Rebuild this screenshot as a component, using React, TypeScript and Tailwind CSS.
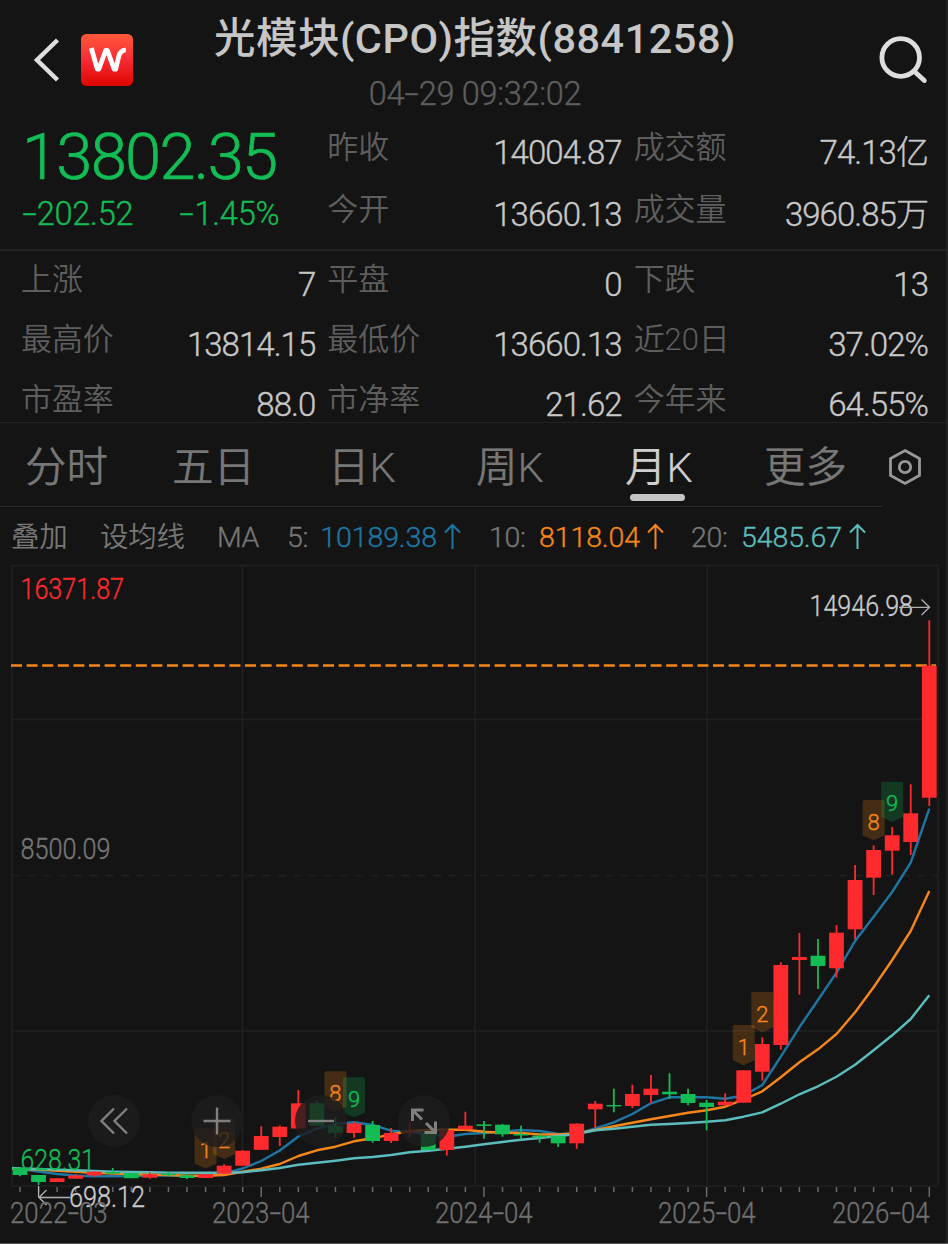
import React from "react";

type Candle = [up: 0 | 1, open: number, close: number, high: number, low: number];

const STEP = 18.557;
const xAt = (i: number) => 20 + i * STEP;

const candles: Candle[] = [
  [0, 1167.7, 1175, 1167.7, 1176.3], [0, 1175, 1182, 1175, 1185], [1, 1178.3, 1182, 1178.3, 1182],
  [1, 1175.5, 1178.7, 1174, 1178.7], [1, 1171.6, 1175.5, 1171.6, 1176.7], [0, 1172, 1173.7, 1168, 1173.7],
  [0, 1173, 1178.2, 1173, 1178.2], [1, 1174.3, 1177.7, 1172.3, 1178.7], [0, 1173.7, 1175.3, 1172, 1176.3],
  [0, 1175.3, 1178, 1174, 1179], [1, 1174, 1178, 1174, 1178], [1, 1165.7, 1173.7, 1164.3, 1173.7],
  [1, 1150.7, 1165.7, 1150.2, 1165.7], [1, 1136, 1149.8, 1126.3, 1149.8], [1, 1126.7, 1137, 1125.5, 1146],
  [1, 1103.3, 1128.5, 1090, 1128.5], [0, 1103.3, 1125.7, 1100.7, 1125.7], [0, 1126, 1132.7, 1116.7, 1137.7],
  [1, 1123.5, 1133, 1122, 1137.7], [0, 1125, 1141, 1121, 1142.7], [1, 1133, 1141, 1128, 1143],
  [1, 1130.5, 1132.5, 1121.7, 1137], [0, 1133, 1150, 1133, 1150], [1, 1130, 1150, 1128, 1155.5],
  [1, 1125.7, 1129.5, 1111.7, 1129.5], [0, 1124.4, 1126, 1121, 1138.7], [0, 1124.7, 1134.3, 1124, 1136.7],
  [0, 1134, 1135.5, 1125.7, 1139.3], [0, 1135.7, 1137.3, 1133, 1142.7], [0, 1136, 1143.3, 1136, 1147],
  [1, 1123.7, 1143.3, 1123.3, 1148.7], [1, 1103.7, 1109.3, 1101, 1128], [0, 1105, 1106.4, 1088.7, 1112.3],
  [1, 1094, 1106, 1084.7, 1108], [1, 1088.7, 1095, 1075, 1103.3], [0, 1091.7, 1094.3, 1073.3, 1099],
  [0, 1094, 1103, 1088.7, 1105.3], [0, 1102.7, 1107, 1100, 1130.3], [1, 1101.7, 1105.3, 1093.3, 1105.3],
  [1, 1070.3, 1102.7, 1070.3, 1102.7], [1, 1044, 1071.7, 1037.3, 1080.7], [1, 965, 1045, 962.3, 1049.7],
  [1, 957, 960, 933, 994.7], [0, 955.7, 966, 939, 989], [1, 932.7, 968.3, 925, 977.7],
  [1, 880, 929.3, 865, 939.3], [1, 850, 877.7, 845.3, 895], [1, 835.3, 850.7, 827, 874.7],
  [1, 813.3, 842, 784.3, 855], [1, 665.7, 797.7, 620.3, 806],
];

const ma5 = [
  1169, 1171.5, 1174, 1175.5, 1176.3, 1176.3, 1176, 1175.5, 1175.5, 1176, 1175.7, 1173.5, 1168.5, 1161, 1150.5,
  1136.5, 1128.7, 1124, 1122.3, 1125, 1130.7, 1132, 1134, 1136.8, 1134, 1133, 1131.7, 1130, 1131, 1134, 1134,
  1128.3, 1122.3, 1114, 1103.3, 1097.3, 1097.3, 1097.3, 1098.7, 1095.5, 1085, 1056.7, 1027.3, 1000, 972.7, 941,
  916.7, 892, 862.7, 808.7,
];
const ma10 = [
  1169, 1169.5, 1170.7, 1171.8, 1172.8, 1173.5, 1174, 1174.5, 1175, 1175.8, 1175.7, 1175, 1171.7, 1168.7, 1164,
  1156, 1150.3, 1146.7, 1141.3, 1138.3, 1134.3, 1131.3, 1130, 1129.7, 1129.7, 1131.7, 1132.7, 1133, 1134.5,
  1134.5, 1133.3, 1130, 1126.3, 1122.7, 1119.3, 1116, 1112.7, 1110.3, 1106.7, 1099.5, 1091.3, 1077.3, 1062.3,
  1049.3, 1034, 1012.3, 987.3, 960, 931, 891,
];
const ma20 = [
  1168.5, 1169, 1169.6, 1170.3, 1171, 1171.6, 1172, 1172.3, 1172.6, 1172.8, 1172.8, 1172.7, 1172.2, 1170.2, 1168,
  1164.7, 1162.7, 1160.7, 1158.3, 1157, 1155, 1152.3, 1150.7, 1148.7, 1146.7, 1144.3, 1142, 1139.7, 1138, 1136,
  1134, 1130.3, 1128.7, 1126.7, 1124.7, 1124, 1123, 1121.7, 1120.3, 1116.7, 1112.3, 1103.7, 1094.3, 1086.3,
  1076.7, 1064.7, 1050.3, 1035.3, 1019, 995.3,
];

const signals = [
  { i: 10, top: 1128.3, n: "1", green: false },
  { i: 11, top: 1118.7, n: "2", green: false },
  { i: 17, top: 1071.3, n: "8", green: false },
  { i: 18, top: 1077.3, n: "9", green: true },
  { i: 39, top: 1025, n: "1", green: false },
  { i: 40, top: 992, n: "2", green: false },
  { i: 46, top: 800, n: "8", green: false },
  { i: 47, top: 781.7, n: "9", green: true },
];

const path = (ys: number[]) => `M12 ${ys[0] - 0.5}` + ys.map((y, i) => `L${xAt(i).toFixed(1)} ${y}`).join("");

/** Numeric text whose hyphens are drawn at the width of a figure dash. */
function Num({ children, className = "" }: { children: string; className?: string }) {
  return (
    <span className={`whitespace-nowrap [-webkit-text-stroke:0.35px_currentColor] ${className}`}>
      {children.split(/(-)/).map((part, i) =>
        part === "-" ? (
          <span key={i} className="inline-block w-[0.45em] text-center tracking-normal">
            <span className="inline-block origin-center scale-x-[1.6]">-</span>
          </span>
        ) : (
          part
        ),
      )}
    </span>
  );
}

function Stat({ label, value }: { label: string; value: string }) {
  return (
    <div className="flex h-[60px] items-center justify-between">
      <span className="pb-[9px] text-[31px] leading-none font-[350] tracking-[-0.1px] text-[#5e5e5e]">{label}</span>
      <Num className="mr-[1px] text-[33px] leading-none font-light tracking-[-0.95px] text-[#c8c8c8]">{value}</Num>
    </div>
  );
}

function PriceLabel({ x, y, width, color, children }: { x: number; y: number; width: number; color: string; children: string }) {
  return (
    <text
      x={x} y={y} textLength={width} lengthAdjust="spacingAndGlyphs"
      fill={color} stroke={color} strokeWidth="0.35" fontSize="29" fontWeight="300"
    >
      {children}
    </text>
  );
}

function Chart() {
  return (
    <svg className="relative block overflow-visible" width="948" height="640" viewBox="0 560 948 640" fill="none">
      <g stroke="#202020" strokeWidth="1.5">
        <rect x="12" y="565.5" width="926" height="620.5" />
        <path d="M12 719.5H938M12 1031H938M242.5 565V1186M475 565V1186M707 565V1186" />
        <path d="M12 875.5H938" strokeDasharray="8 7.6" />
      </g>
      <g stroke="#6a6a6a" strokeWidth="1.5">
        {candles.map((_, i) => (
          <path key={i} d={`M${xAt(i)} 1187V${i > 1 && i % 12 === 1 ? 1197 : 1192}`} />
        ))}
      </g>
      <g strokeWidth="2.4" strokeLinejoin="round">
        <path d={path(ma5)} stroke="#1f76a3" />
        <path d={path(ma10)} stroke="#f5871a" />
        <path d={path(ma20)} stroke="#5dbcbc" />
      </g>
      <path d="M11 665.5H936" stroke="#f5871a" strokeWidth="2.6" strokeDasharray="11 4.6" />
      {candles.map(([up, a, b, hi, lo], i) => (
        <g key={i} fill={up ? "#ff2a2d" : "#12bd55"}>
          <rect x={xAt(i) - 0.9} y={hi} width="1.8" height={lo - hi} />
          <rect x={xAt(i) - 7.4} y={a} width="14.8" height={b - a} />
        </g>
      ))}
      {signals.map(({ i, top, n, green }) => (
        <g key={i}>
          <path
            d={`M${xAt(i) - 11} ${top + 1.5}q0-1.5 1.5-1.5h19q1.5 0 1.5 1.5v33.8l-11 5-11-5z`}
            fill={green ? "#12bd55" : "#f5871a"}
            fillOpacity="0.22"
          />
          <text
            x={xAt(i)} y={top + 29.5} fontSize="22" textAnchor="middle" fontWeight="300"
            fill={green ? "#12bd55" : "#f5871a"} stroke={green ? "#12bd55" : "#f5871a"} strokeWidth="0.35"
          >
            {n}
          </text>
        </g>
      ))}
      <PriceLabel x={20.5} y={599} width={103.5} color="#ff2a2d">16371.87</PriceLabel>
      <PriceLabel x={20.5} y={859} width={90} color="#777">8500.09</PriceLabel>
      <PriceLabel x={20.5} y={1170.3} width={74.5} color="#12bd55">628.31</PriceLabel>
      <PriceLabel x={69} y={1207.3} width={76} color="#cbcbcb">698.12</PriceLabel>
      <PriceLabel x={809.5} y={616.3} width={103.5} color="#cbcbcb">14946.98</PriceLabel>
      <g stroke="#b0b0b0" strokeWidth="1.3">
        <path d="M38.6 1186V1197M70 1197.5H39M46.5 1190L39 1197.5L46.5 1205" />
        <path d="M899 607.3H929M921.5 599.5L929.5 607.3L921.5 615" />
      </g>
    </svg>
  );
}

function RoundButton({ children }: { children: React.ReactNode }) {
  return (
    <button className="flex size-[52px] items-center justify-center rounded-full bg-[#1d1d1d]/80">
      <svg width="28" height="28" viewBox="0 0 28 28" fill="none" stroke="#808080" strokeWidth="2.4">
        {children}
      </svg>
    </button>
  );
}

function Tab({ children, active }: { children: string; active?: boolean }) {
  return (
    <div
      className={`relative text-[41.5px] leading-[90px] font-[350] whitespace-nowrap [-webkit-text-stroke:0.2px_currentColor] ${
        active ? "text-[#cfcfcf]" : "text-[#777]"
      }`}
    >
      {children}
      {active && <span className="absolute top-[71px] left-[5px] h-[6.5px] w-[55px] rounded-full bg-[#c4c4c4]" />}
    </div>
  );
}

function Average({ label, value, color }: { label: string; value: string; color: string }) {
  return (
    <div className="flex">
      <Num>{label}</Num>
      <span className={`ml-auto flex ${color}`}>
        <Num className="tracking-[-0.1px]">{value}</Num>
        <svg className="mt-[16px] ml-[7px]" width="17" height="27" viewBox="0 0 17 27" fill="none" stroke="currentColor" strokeWidth="2">
          <path d="M8.5 26V2M1 9.5L8.5 2L16 9.5" />
        </svg>
      </span>
    </div>
  );
}

export default function App() {
  return (
    <main className="relative flex h-[1244px] w-[948px] flex-col overflow-hidden border-b border-[#555] bg-[#141414] font-['Roboto','Noto_Sans_CJK_SC',sans-serif]">
      <header className="flex h-[120px] shrink-0 justify-between">
        <div className="flex items-center pl-[33px]">
          <svg width="28" height="44" viewBox="0 0 28 44" fill="none" stroke="#dedede" strokeWidth="4.5">
            <path d="M24.5 2L4 22L24.5 42" />
          </svg>
          <svg className="ml-[20px]" width="52" height="52" viewBox="0 0 52 52">
            <defs>
              <linearGradient id="logo" x1="0" y1="0" x2="0" y2="1">
                <stop offset="0" stopColor="#ff5a38" />
                <stop offset="0.45" stopColor="#fa2f38" />
                <stop offset="1" stopColor="#dd0500" />
              </linearGradient>
            </defs>
            <rect width="52" height="52" rx="5.5" fill="url(#logo)" />
            <path
              d="M10.3 14L16.3 35.2H17.8L24.6 16.5H26.4L33.2 35.2H34.7L37.6 23Q39.3 16 44.8 16.2"
              fill="none" stroke="#fff" strokeWidth="4.8" strokeLinejoin="round"
            />
          </svg>
        </div>
        <div className="flex flex-col items-center text-center">
          <h1 className="mt-[14px] text-[41.5px] leading-[50px] font-medium tracking-[0.5px] whitespace-nowrap text-[#c6c6c6]">
            光模块(CPO)指数(8841258)
          </h1>
          <Num className="mt-[10px] text-[32.5px] leading-[40px] font-light tracking-[-0.3px] text-[#5e5e5e]">04-29 09:32:02</Num>
        </div>
        <svg className="mt-[34px] mr-[19px] ml-[60px]" width="52" height="52" viewBox="0 0 52 52" fill="none" stroke="#dedede" strokeWidth="4.8">
          <circle cx="23.7" cy="23.5" r="18.8" />
          <path d="M37 37L47.3 46.5" strokeLinecap="round" />
        </svg>
      </header>

      <section className="grid h-[131px] shrink-0 grid-cols-3 gap-x-[11px] border-b-2 border-[#242424] pr-[19px] pl-[21px]">
        <div className="text-[#12bd55]">
          <div className="mt-[3px] pl-[1px] text-[65px] leading-[69px] font-light tracking-[-1.7px] [-webkit-text-stroke:0.7px_currentColor]">
            13802.35
          </div>
          <div className="mt-[2px] flex justify-between pr-[37px] pl-[1px] text-[32.5px] leading-[40px] font-light tracking-[-0.2px]">
            <Num>-202.52</Num>
            <Num>-1.45%</Num>
          </div>
        </div>
        <div className="flex flex-col gap-[2px] pt-[2px]">
          <Stat label="昨收" value="14004.87" />
          <Stat label="今开" value="13660.13" />
        </div>
        <div className="flex flex-col gap-[2px] pt-[2px]">
          <Stat label="成交额" value="74.13亿" />
          <Stat label="成交量" value="3960.85万" />
        </div>
      </section>

      <section className="grid h-[172px] shrink-0 auto-rows-[60px] grid-cols-3 gap-x-[11px] border-b border-[#242424] pt-[3px] pr-[19px] pl-[21px]">
        <Stat label="上涨" value="7" />
        <Stat label="平盘" value="0" />
        <Stat label="下跌" value="13" />
        <Stat label="最高价" value="13814.15" />
        <Stat label="最低价" value="13660.13" />
        <Stat label="近20日" value="37.02%" />
        <Stat label="市盈率" value="88.0" />
        <Stat label="市净率" value="21.62" />
        <Stat label="今年来" value="64.55%" />
      </section>

      <nav className="flex h-[84px] shrink-0">
        <div className="grid w-[882px] grid-cols-[147px_156px_148px_149px_139px_auto] border-b border-[#2a2a2a] pl-[25px]">
          <Tab>分时</Tab>
          <Tab>五日</Tab>
          <Tab>日K</Tab>
          <Tab>周K</Tab>
          <Tab active>月K</Tab>
          <Tab>更多</Tab>
        </div>
        <svg className="mt-[25px] ml-[6px]" width="34" height="38" viewBox="0 0 34 38" fill="none" stroke="#999" strokeWidth="2.8">
          <path d="M17 2.5L31.5 10.5V27.5L17 35.5L2.5 27.5V10.5Z" />
          <circle cx="17" cy="19" r="5.7" />
        </svg>
      </nav>

      <div className="grid h-[53px] shrink-0 grid-cols-[89px_117px_70px_174px_28px_175px_27px_175px] pl-[11px] text-[28.5px] leading-[61px] font-[350] tracking-[-0.3px] whitespace-nowrap text-[#777]">
        <span>叠加</span>
        <span>设均线</span>
        <Num>MA</Num>
        <Average label="5:" value="10189.38" color="text-[#1f76a3]" />
        <span />
        <Average label="10:" value="8118.04" color="text-[#f5871a]" />
        <span />
        <Average label="20:" value="5485.67" color="text-[#5dbcbc]" />
      </div>

      <div className="relative">
        <Chart />
        <div className="absolute top-[535px] left-[88px] flex gap-[51.3px]">
          <RoundButton><path d="M14 1.5L1.5 14L14 26.5M27 1.5L14.5 14L27 26.5" /></RoundButton>
          <RoundButton><path d="M0.5 14H27.5M14 0.5V27.5" /></RoundButton>
          <RoundButton><path d="M1 14H27" /></RoundButton>
          <RoundButton><path d="M2.5 14V3H13.5M3 3.5L12 12.5M25.5 14.5V25.5H14.5M25 25L16 16" strokeWidth="3" /></RoundButton>
        </div>
      </div>
      <div className="grid grid-cols-[202px_223px_223px_174px_auto] justify-items-start pl-[10px] text-[29px] leading-[26px] font-light text-[#707070]">
        <Num className="inline-block origin-left scale-x-[0.89]">2022-03</Num>
        <Num className="inline-block origin-left scale-x-[0.89]">2023-04</Num>
        <Num className="inline-block origin-left scale-x-[0.89]">2024-04</Num>
        <Num className="inline-block origin-left scale-x-[0.89]">2025-04</Num>
        <Num className="inline-block origin-left scale-x-[0.89]">2026-04</Num>
      </div>
      <div className="absolute top-0 right-0 h-full w-[2px] bg-[#242424]" />
    </main>
  );
}
